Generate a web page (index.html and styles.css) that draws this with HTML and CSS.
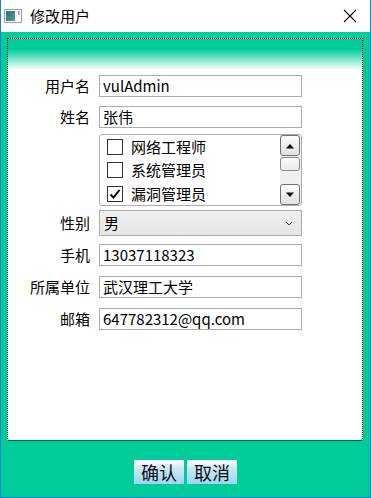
FILE: index.html
```html
<!DOCTYPE html>
<html lang="zh">
<head>
<meta charset="utf-8">
<title>修改用户</title>
<link rel="stylesheet" href="styles.css">
</head>
<body>
<div class="window">
  <div class="titlebar">
    <svg class="app-icon" width="18" height="14" viewBox="0 0 18 14">
      <defs>
        <linearGradient id="ig" x1="0" y1="0" x2="1" y2="1">
          <stop offset="0" stop-color="#2f6f8f"/>
          <stop offset="1" stop-color="#4fa07a"/>
        </linearGradient>
      </defs>
      <rect x="0.5" y="0.5" width="17" height="13" fill="#fff" stroke="#a0a0a0"/>
      <rect x="2" y="2" width="9" height="10" fill="url(#ig)"/>
      <rect x="14" y="2" width="1.5" height="4" fill="#9a9a9a"/>
    </svg>
    <span class="title">修改用户</span>
    <svg class="close" width="14" height="14" viewBox="0 0 14 14">
      <path d="M1 1 L13 13 M13 1 L1 13" stroke="#000" stroke-width="1.1" fill="none"/>
    </svg>
  </div>
  <div class="client">
    <div class="panel">
      <div class="form">
        <div class="row">
          <label class="lbl">用户名</label>
          <div class="field">vulAdmin</div>
        </div>
        <div class="row r2">
          <label class="lbl">姓名</label>
          <div class="field">张伟</div>
        </div>
        <div class="row r3">
          <span class="lbl"></span>
          <div class="listbox">
            <div class="items">
              <div class="item"><span class="cb"></span>网络工程师</div>
              <div class="item"><span class="cb"></span>系统管理员</div>
              <div class="item"><span class="cb checked"><svg width="14" height="14" viewBox="0 0 14 14"><path d="M2.5 7.5 L5.5 10.5 L11.5 3" stroke="#000" stroke-width="2" fill="none"/></svg></span>漏洞管理员</div>
            </div>
            <div class="scrollbar">
              <div class="sbtn"><svg width="10" height="6" viewBox="0 0 10 6"><path d="M1 5.5 L5 1 L9 5.5 Z" fill="#000"/></svg></div>
              <div class="thumb"></div>
              <div class="track"></div>
              <div class="sbtn"><svg width="10" height="6" viewBox="0 0 10 6"><path d="M1 0.5 L5 5 L9 0.5 Z" fill="#000"/></svg></div>
            </div>
          </div>
        </div>
        <div class="row r4">
          <label class="lbl">性别</label>
          <div class="select">
            <span>男</span>
            <svg class="chev" width="8" height="5" viewBox="0 0 8 5"><path d="M1 1 L4 4 L7 1" stroke="#444" stroke-width="1" fill="none"/></svg>
          </div>
        </div>
        <div class="row r5">
          <label class="lbl">手机</label>
          <div class="field">13037118323</div>
        </div>
        <div class="row r6">
          <label class="lbl">所属单位</label>
          <div class="field">武汉理工大学</div>
        </div>
        <div class="row r6">
          <label class="lbl">邮箱</label>
          <div class="field">647782312@qq.com</div>
        </div>
      </div>
    </div>
    <div class="buttons">
      <div class="btn">确认</div>
      <div class="btn">取消</div>
    </div>
  </div>
</div>
</body>
</html>
```

FILE: styles.css
```css
* { box-sizing: border-box; }
html, body { margin: 0; padding: 0; }
body {
  width: 371px;
  height: 498px;
  font-family: "Noto Sans CJK SC", "Noto Sans", sans-serif;
  color: #000;
}
.window {
  width: 371px;
  height: 498px;
  border: 1px solid #1883d7;
  border-top: none;
  display: flex;
  flex-direction: column;
  background: #00cc99;
}
.titlebar {
  height: 32px;
  background: #fff;
  display: flex;
  align-items: center;
  padding-left: 3px;
  padding-right: 13px;
}
.app-icon { display: block; }
.title {
  margin-left: 8px;
  font-size: 15px;
  line-height: 20px;
  flex: 1;
}
.close { display: block; }
.client {
  flex: 1;
  display: flex;
  flex-direction: column;
}
.panel {
  margin: 6px 7px 0 6px;
  height: 403px;
  border: 1px dotted #000;
  border-radius: 0 0 3px 3px;
  background: linear-gradient(#00cc99 0px, #00cc99 10px, #ffffff 31px);
  padding-top: 36px;
}
.form {
  display: flex;
  flex-direction: column;
}
.row {
  display: flex;
  align-items: center;
}
.r2 { margin-top: 9px; }
.r3 { margin-top: 6px; }
.r4 { margin-top: 4px; }
.r5 { margin-top: 8px; }
.r6 { margin-top: 10px; }
.lbl {
  width: 82px;
  margin-right: 9px;
  text-align: right;
  font-size: 15px;
  line-height: 20px;
}
.field {
  width: 203px;
  height: 22px;
  border: 1px solid #ababab;
  background: #fff;
  padding-left: 3px;
  font-size: 15px;
  line-height: 20px;
  white-space: nowrap;
}
.listbox {
  width: 203px;
  height: 72px;
  border: 1px solid #abadb3;
  border-radius: 3px;
  background: #fff;
  display: flex;
}
.items {
  flex: 1;
  padding: 0 0 0 7px;
}
.item {
  height: 23.5px;
  display: flex;
  align-items: center;
  font-size: 15px;
  line-height: 20px;
}
.cb {
  width: 16px;
  height: 16px;
  border: 1px solid #333;
  background: #fff;
  margin-right: 8px;
  display: flex;
  align-items: center;
  justify-content: center;
}
.cb svg { display: block; }
.scrollbar {
  width: 21px;
  background: #f0f0f0;
  display: flex;
  flex-direction: column;
  padding: 0 1px 0 0;
  border-radius: 0 2px 2px 0;
}
.sbtn {
  height: 21px;
  border: 1px solid #707070;
  border-radius: 3px;
  background: linear-gradient(#fdfdfd, #e0e0e0);
  display: flex;
  align-items: center;
  justify-content: center;
}
.sbtn svg { display: block; }
.thumb {
  height: 14px;
  margin-top: 1px;
  border: 1px solid #8a8a8a;
  border-radius: 3px;
  background: linear-gradient(#fafafa, #ebebeb);
}
.track { flex: 1; }
.select {
  width: 203px;
  height: 26px;
  border: 1px solid #acacac;
  background: linear-gradient(#f0f0f0, #e5e5e5);
  display: flex;
  align-items: center;
  justify-content: space-between;
  padding: 0 8px 0 4px;
  font-size: 15px;
  line-height: 20px;
}
.chev { display: block; }
.buttons {
  margin-top: 19px;
  display: flex;
  justify-content: center;
  gap: 3px;
}
.btn {
  width: 50px;
  height: 24px;
  background: linear-gradient(#ffffff 0%, #cbe9f5 35%, #9dd6ee 100%);
  display: flex;
  align-items: center;
  justify-content: center;
  font-size: 18px;
  line-height: 22px;
  color: #111;
}
```
